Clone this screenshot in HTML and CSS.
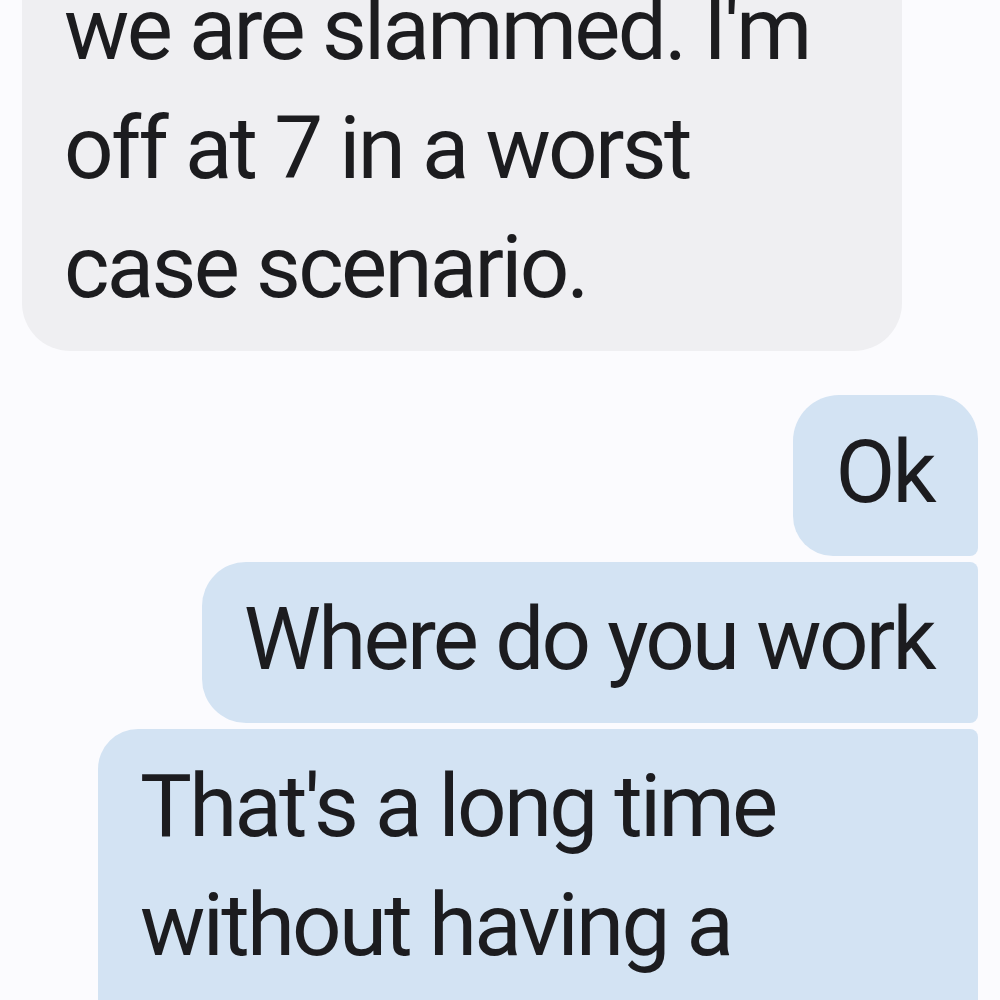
FILE: index.html
```html
<!DOCTYPE html>
<html lang="en">
<head>
<meta charset="utf-8">
<title>Messages</title>
<link rel="stylesheet" href="styles.css">
</head>
<body>
<div class="thread">
  <div class="bubble received">we are slammed. I'm off at 7 in a worst case scenario.</div>
  <div class="bubble sent first">Ok</div>
  <div class="bubble sent middle">Where do you work</div>
  <div class="bubble sent last">That's a long time without having a</div>
</div>
</body>
</html>
```
FILE: styles.css
```css
html, body {
  margin: 0;
  height: 1000px;
  overflow: hidden;
  background: #fbfbfe;
}
.thread {
  display: flex;
  flex-direction: column;
  padding: 0 22px;
  margin-top: -48px;
}
.bubble {
  box-sizing: border-box;
  font-family: Roboto, "Noto Sans", sans-serif;
  font-size: 87px;
  line-height: 119px;
  letter-spacing: -2.7px;
  padding: 18px 44px 24px 42px;
  color: #1c1c1f;
}
.received {
  align-self: flex-start;
  width: 880px;
  background: #efeff2;
  border-radius: 48px;
  margin-bottom: 44px;
}
.sent {
  align-self: flex-end;
  background: #d3e3f3;
}
.sent + .sent {
  margin-top: 6px;
}
.first {
  border-radius: 46px 44px 8px 40px;
}
.middle {
  border-radius: 44px 8px 8px 44px;
}
.last {
  width: 880px;
  padding-bottom: 90px;
  border-radius: 40px 8px 44px 44px;
}
```
